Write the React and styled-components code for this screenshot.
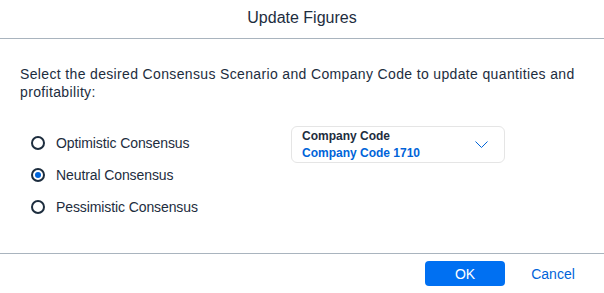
import React, { useState } from "react";
import styled, { createGlobalStyle } from "styled-components";

const Global = createGlobalStyle`
  html, body { margin: 0; padding: 0; background: #fff; }
  body { font-family: "Liberation Sans", Arial, sans-serif; color: #1d2d3e; }
  * { box-sizing: border-box; }
`;

const Dialog = styled.div`
  width: 604px;
  height: 293px;
  display: flex;
  flex-direction: column;
  background: #fff;
`;

const Header = styled.header`
  height: 39px;
  border-bottom: 1px solid #a9b4be;
  display: flex;
  align-items: center;
  justify-content: center;
  font-size: 16px;
  color: #1d2d3e;
  padding-bottom: 2px;
`;

const Content = styled.main`
  flex: 1;
  padding: 26px 20px 0 20px;
`;

const Intro = styled.p`
  margin: 0;
  font-size: 14px;
  line-height: 18px;
  letter-spacing: 0.35px;
  color: #1d2d3e;
  width: 564px;
`;

const Body = styled.div`
  display: flex;
  margin-top: 25px;
`;

const RadioGroup = styled.div`
  width: 271px;
  display: flex;
  flex-direction: column;
  padding-top: 1px;
`;

const RadioRow = styled.label`
  height: 32px;
  display: flex;
  align-items: center;
  padding-left: 11px;
  font-size: 14px;
  letter-spacing: -0.1px;
  color: #1d2d3e;
  cursor: pointer;
`;

const Circle = styled.span`
  width: 14px;
  height: 14px;
  border-radius: 50%;
  border: 2px solid #1d2d3e;
  display: flex;
  align-items: center;
  justify-content: center;
  margin-right: 11px;
  flex: none;
  &::after {
    content: "";
    width: 6px;
    height: 6px;
    border-radius: 50%;
    background: ${(p) => (p.$checked ? "#0064d9" : "transparent")};
  }
`;

const Select = styled.div`
  width: 214px;
  height: 37px;
  border: 1px solid #e5e5e5;
  border-radius: 6px;
  display: flex;
  align-items: center;
  padding: 0 16px 0 10px;
`;

const SelectText = styled.div`
  flex: 1;
  display: flex;
  flex-direction: column;
  font-weight: bold;
  font-size: 12px;
  line-height: 17px;
`;

const SelectLabel = styled.span`
  color: #1d2d3e;
`;

const SelectValue = styled.span`
  color: #0064d9;
`;

const Footer = styled.footer`
  height: 40px;
  border-top: 1px solid #a9b4be;
  display: flex;
  align-items: center;
  justify-content: flex-end;
  gap: 8px;
  padding-right: 11px;
`;

const Button = styled.button`
  width: 80px;
  height: 25px;
  border-radius: 4px;
  border: none;
  font-family: inherit;
  font-size: 14px;
  cursor: pointer;
  background: ${(p) => (p.$primary ? "#0070f2" : "transparent")};
  color: ${(p) => (p.$primary ? "#fff" : "#0064d9")};
`;

const options = ["Optimistic Consensus", "Neutral Consensus", "Pessimistic Consensus"];

export default function App() {
  const [sel, setSel] = useState(1);
  return (
    <Dialog>
      <Global />
      <Header>Update Figures</Header>
      <Content>
        <Intro>
          Select the desired Consensus Scenario and Company Code to update quantities and profitability:
        </Intro>
        <Body>
          <RadioGroup>
            {options.map((o, i) => (
              <RadioRow key={o} onClick={() => setSel(i)}>
                <Circle $checked={sel === i} />
                {o}
              </RadioRow>
            ))}
          </RadioGroup>
          <Select>
            <SelectText>
              <SelectLabel>Company Code</SelectLabel>
              <SelectValue>Company Code 1710</SelectValue>
            </SelectText>
            <svg width="13" height="7" viewBox="0 0 13 7" fill="none">
              <path d="M0.5 0.5l6 6 6-6" stroke="#0064d9" strokeWidth="1" />
            </svg>
          </Select>
        </Body>
      </Content>
      <Footer>
        <Button $primary>OK</Button>
        <Button>Cancel</Button>
      </Footer>
    </Dialog>
  );
}
